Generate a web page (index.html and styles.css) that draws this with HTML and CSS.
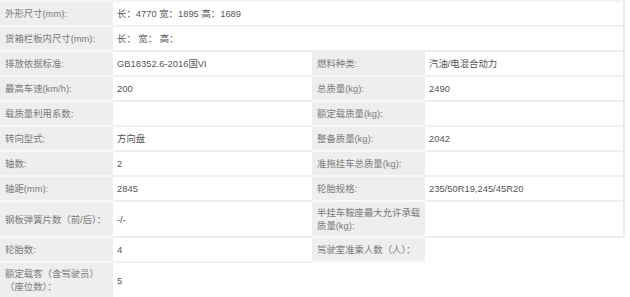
FILE: index.html
```html
<!DOCTYPE html>
<html lang="zh">
<head>
<meta charset="utf-8">
<link rel="stylesheet" href="styles.css">
</head>
<body>
<div class="spec">
  <div class="k">外形尺寸(mm):</div>
  <div class="v wide edge">长：4770 宽：1895 高：1689</div>

  <div class="k">货箱栏板内尺寸(mm):</div>
  <div class="v wide edge">长： 宽： 高：</div>

  <div class="k">排放依据标准:</div>
  <div class="v">GB18352.6-2016国VI</div>
  <div class="k">燃料种类:</div>
  <div class="v edge">汽油/电混合动力</div>

  <div class="k">最高车速(km/h):</div>
  <div class="v">200</div>
  <div class="k">总质量(kg):</div>
  <div class="v edge">2490</div>

  <div class="k">载质量利用系数:</div>
  <div class="v"></div>
  <div class="k">额定载质量(kg):</div>
  <div class="v edge"></div>

  <div class="k">转向型式:</div>
  <div class="v">方向盘</div>
  <div class="k">整备质量(kg):</div>
  <div class="v edge">2042</div>

  <div class="k">轴数:</div>
  <div class="v">2</div>
  <div class="k">准拖挂车总质量(kg):</div>
  <div class="v edge"></div>

  <div class="k">轴距(mm):</div>
  <div class="v">2845</div>
  <div class="k">轮胎规格:</div>
  <div class="v edge">235/50R19,245/45R20</div>

  <div class="k">钢板弹簧片数（前/后）：</div>
  <div class="v">-/-</div>
  <div class="k">半挂车鞍座最大允许承载质量(kg):</div>
  <div class="v edge"></div>

  <div class="k">轮胎数:</div>
  <div class="v">4</div>
  <div class="k">驾驶室准乘人数（人）：</div>
  <div class="v blank"></div>

  <div class="k">额定载客（含驾驶员）（座位数）：</div>
  <div class="v wide">5</div>
</div>
</body>
</html>
```

FILE: styles.css
```css
html, body {
  margin: 0;
  padding: 0;
  background: #ffffff;
}

body {
  font-family: "Liberation Sans", "Noto Sans CJK SC", sans-serif;
  font-size: 9.4px;
  line-height: 13px;
}

.spec {
  display: grid;
  grid-template-columns: 113px 199px 113px 200px;
  width: 625px;
  border-top: 2px solid #f3f3f3;
}

.k,
.v {
  box-sizing: border-box;
  min-height: 25px;
  display: flex;
  align-items: center;
  padding: 4px 4px;
}

.k {
  background: #eeeeee;
  color: #7a7a7a;
  padding-left: 5px;
  border-bottom: 2px solid #f7f7f7;
}

.v {
  background: #ffffff;
  color: #555555;
  border-bottom: 2px solid #efefef;
}

.wide {
  grid-column: span 3;
}

.edge {
  border-right: 2px solid #ebebeb;
}

.blank {
  border-bottom-color: #ffffff;
}
```
